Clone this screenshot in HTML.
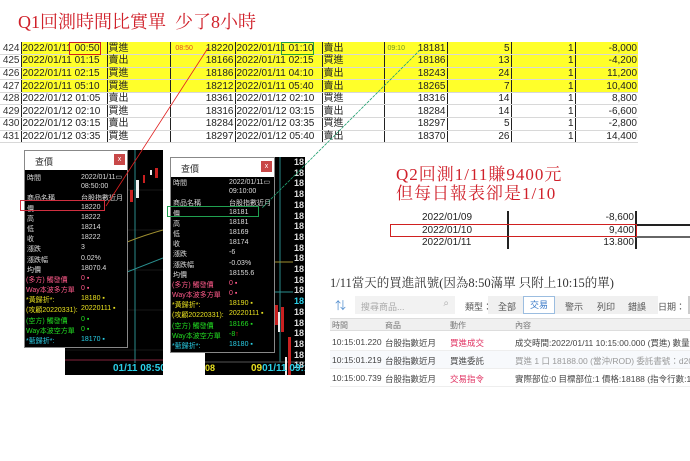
<!DOCTYPE html>
<html><head><meta charset="utf-8"><style>
*{margin:0;padding:0;box-sizing:border-box}
body{width:690px;height:461px;background:#fff;position:relative;overflow:hidden;font-family:"Liberation Sans","Noto Sans CJK TC",sans-serif}
.a{position:absolute;white-space:nowrap}
.t{font-family:"Liberation Serif","Noto Serif CJK SC",serif;color:#d0202a}
table.x{position:absolute;left:0;top:42px;border-collapse:collapse;font-size:10px;color:#222}
table.x td{height:12.6px;padding:0 1px;border-bottom:1px solid #d8d8d8;line-height:11px}
.y td{background:#ffff2a}
table.x td.n{background:#fff;text-align:right;width:21px;color:#333}
.bl{border-left:1.5px solid #222}
.r{text-align:right}
.pn{position:absolute;background:#000;border:1px solid #888;font-size:7px;color:#ddd}
.pn .h{background:#fff;height:19px;color:#333;font-size:9px;padding:4px 0 0 10px;position:relative}
.pn .h b{position:absolute;right:2px;top:3px;width:11px;height:11px;background:#c84848;color:#fff;font-size:7px;text-align:center;line-height:11px;font-weight:normal}
.pn .row{height:10.2px;position:relative}
.pn .row span{position:absolute;top:0}
.ch{position:absolute;background:#000;overflow:hidden}
.pk{color:#ff5a8a}.yl{color:#e8e020}.gr{color:#22dd22}.cy{color:#2ad0e8}
</style></head><body>
<div class="a t" style="left:18px;top:8px;font-size:18px">Q1回測時間比實單&nbsp;&nbsp;少了8小時</div>

<table class="x">
<colgroup><col style="width:21px"><col style="width:86px"><col style="width:63px"><col style="width:65px"><col style="width:87px"><col style="width:62px"><col style="width:63px"><col style="width:64px"><col style="width:64px"><col style="width:63px"></colgroup>
<tr class="y"><td class="n">424</td><td class="bl">2022/01/11 00:50</td><td class="bl">買進</td><td class="bl r"><span style="float:left;color:#e05020;font-size:7px">&nbsp;&nbsp;08:50</span>18220</td><td class="bl">2022/01/11 01:10</td><td class="bl">賣出</td><td class="bl r"><span style="float:left;color:#7a9a20;font-size:7px">&nbsp;09:10</span>18181</td><td class="bl r">5</td><td class="bl r">1</td><td class="bl r">-8,000</td></tr>
<tr class="y"><td class="n">425</td><td class="bl">2022/01/11 01:15</td><td class="bl">賣出</td><td class="bl r">18166</td><td class="bl">2022/01/11 02:15</td><td class="bl">買進</td><td class="bl r">18186</td><td class="bl r">13</td><td class="bl r">1</td><td class="bl r">-4,200</td></tr>
<tr class="y"><td class="n">426</td><td class="bl">2022/01/11 02:15</td><td class="bl">買進</td><td class="bl r">18186</td><td class="bl">2022/01/11 04:10</td><td class="bl">賣出</td><td class="bl r">18243</td><td class="bl r">24</td><td class="bl r">1</td><td class="bl r">11,200</td></tr>
<tr class="y"><td class="n">427</td><td class="bl">2022/01/11 05:10</td><td class="bl">買進</td><td class="bl r">18212</td><td class="bl">2022/01/11 05:40</td><td class="bl">賣出</td><td class="bl r">18265</td><td class="bl r">7</td><td class="bl r">1</td><td class="bl r">10,400</td></tr>
<tr><td class="n">428</td><td class="bl">2022/01/12 01:05</td><td class="bl">賣出</td><td class="bl r">18361</td><td class="bl">2022/01/12 02:10</td><td class="bl">買進</td><td class="bl r">18316</td><td class="bl r">14</td><td class="bl r">1</td><td class="bl r">8,800</td></tr>
<tr><td class="n">429</td><td class="bl">2022/01/12 02:10</td><td class="bl">買進</td><td class="bl r">18316</td><td class="bl">2022/01/12 03:15</td><td class="bl">賣出</td><td class="bl r">18284</td><td class="bl r">14</td><td class="bl r">1</td><td class="bl r">-6,600</td></tr>
<tr><td class="n">430</td><td class="bl">2022/01/12 03:15</td><td class="bl">賣出</td><td class="bl r">18284</td><td class="bl">2022/01/12 03:35</td><td class="bl">買進</td><td class="bl r">18297</td><td class="bl r">5</td><td class="bl r">1</td><td class="bl r">-2,800</td></tr>
<tr><td class="n">431</td><td class="bl">2022/01/12 03:35</td><td class="bl">買進</td><td class="bl r">18297</td><td class="bl">2022/01/12 05:40</td><td class="bl">賣出</td><td class="bl r">18370</td><td class="bl r">26</td><td class="bl r">1</td><td class="bl r">14,400</td></tr>
</table>
<div class="a" style="left:69px;top:42px;width:32px;height:13px;border:1.5px solid #d02020"></div>
<div class="a" style="left:281px;top:42px;width:33px;height:13px;border:1.5px solid #20a040"></div>

<!-- charts -->
<div class="ch" style="left:65px;top:150px;width:98px;height:225px">
<svg width="98" height="225" style="position:absolute;left:0;top:0">
<g stroke="#333" stroke-width=".5"><line x1="0" y1="40" x2="98" y2="40"/><line x1="0" y1="80" x2="98" y2="80"/><line x1="0" y1="120" x2="98" y2="120"/><line x1="0" y1="160" x2="98" y2="160"/><line x1="0" y1="200" x2="98" y2="200"/></g>
<line x1="70" y1="0" x2="70" y2="213" stroke="#2a8a8a" stroke-width="1"/>
<line x1="0" y1="210" x2="98" y2="210" stroke="#b03050" stroke-width=".8"/>
<path d="M62 92 Q80 85 98 80" stroke="#a09030" fill="none"/><path d="M62 122 Q80 115 98 108" stroke="#2a9090" fill="none"/>
<g fill="#c82020"><rect x="65" y="40" width="3" height="12"/><rect x="78" y="25" width="2" height="8"/><rect x="90" y="18" width="3" height="10"/></g>
<g fill="#eee"><rect x="71" y="30" width="3" height="18"/><rect x="85" y="20" width="2" height="5"/></g>
</svg>
<div class="a cy" style="left:48px;top:213px;font-size:10px;font-weight:bold">01/11 08:50</div>
</div>
<div class="ch" style="left:205px;top:157px;width:100px;height:218px">
<svg width="100" height="218" style="position:absolute;left:0;top:0">
<line x1="75" y1="0" x2="75" y2="205" stroke="#2a8a8a"/>
<line x1="55" y1="105" x2="88" y2="105" stroke="#a09030"/><line x1="55" y1="135" x2="88" y2="135" stroke="#2a9090"/>
<line x1="0" y1="205" x2="100" y2="205" stroke="#555"/>
<g fill="#c82020"><rect x="70" y="148" width="3" height="20"/><rect x="76" y="150" width="3" height="25"/><rect x="83" y="180" width="3" height="40"/></g>
<g fill="#eee"><rect x="73" y="155" width="2" height="20"/><rect x="80" y="200" width="2" height="20"/></g>
</svg>
<div class="a" style="left:89px;top:0;font-size:9px;line-height:10.7px;color:#ddd;font-weight:bold">18<br>18<br>18<br>18<br>18<br>18<br>18<br>18<br>18<br>18<br>18<br>18<br>18<br><span class="cy">18</span><br>18<br>18<br>18<br>18<br>18<br>18</div>
<div class="a yl" style="left:0;top:206px;font-size:9px;font-weight:bold">08</div>
<div class="a" style="left:46px;top:206px;font-size:10px;font-weight:bold"><span class="yl">09</span><span class="cy">01/11 09:10</span></div>
</div>

<!-- left panel -->
<div class="pn" style="left:24px;top:150px;width:104px;height:198px">
<div class="h">查價<b>x</b></div>
<div style="padding-top:3px">
<div class="row"><span style="left:2px">時間</span><span style="left:56px">2022/01/11▭</span></div>
<div class="row"><span style="left:56px">08:50:00</span></div>
<div class="row"><span style="left:2px">商品名稱</span><span style="left:56px">台股指數近月</span></div>
<div class="row"><span style="left:2px">價</span><span style="left:56px">18220</span></div>
<div class="row"><span style="left:2px">高</span><span style="left:56px">18222</span></div>
<div class="row"><span style="left:2px">低</span><span style="left:56px">18214</span></div>
<div class="row"><span style="left:2px">收</span><span style="left:56px">18222</span></div>
<div class="row"><span style="left:2px">漲跌</span><span style="left:56px">3</span></div>
<div class="row"><span style="left:2px">漲跌幅</span><span style="left:56px">0.02%</span></div>
<div class="row"><span style="left:2px">均價</span><span style="left:56px">18070.4</span></div>
<div class="row pk"><span style="left:1px">(多方) 觸發價</span><span style="left:56px">0 ▪</span></div>
<div class="row pk"><span style="left:1px">Way本波多方單</span><span style="left:56px">0 ▪</span></div>
<div class="row yl"><span style="left:1px">*黃歸折*:</span><span style="left:56px">18180 ▪</span></div>
<div class="row yl"><span style="left:1px">(攻顧20220331):</span><span style="left:56px">20220111 ▪</span></div>
<div class="row gr"><span style="left:1px">(空方) 觸發價</span><span style="left:56px">0 ▪</span></div>
<div class="row gr"><span style="left:1px">Way本波空方單</span><span style="left:56px">0 ▪</span></div>
<div class="row cy"><span style="left:1px">*藍歸折*:</span><span style="left:56px">18170 ▪</span></div>
</div></div>
<div class="a" style="left:20px;top:200px;width:85px;height:11px;border:1.5px solid #d03040"></div>

<!-- right panel -->
<div class="a" style="left:165px;top:353px;width:40px;height:25px;background:#fff"></div>
<div class="pn" style="left:170px;top:157px;width:105px;height:196px">
<div class="h">查價<b>x</b></div>
<div style="padding-top:1px">
<div class="row"><span style="left:2px">時間</span><span style="left:58px">2022/01/11▭</span></div>
<div class="row"><span style="left:58px">09:10:00</span></div>
<div class="row"><span style="left:2px">商品名稱</span><span style="left:58px">台股指數近月</span></div>
<div class="row"><span style="left:2px">價</span><span style="left:58px">18181</span></div>
<div class="row"><span style="left:2px">高</span><span style="left:58px">18181</span></div>
<div class="row"><span style="left:2px">低</span><span style="left:58px">18169</span></div>
<div class="row"><span style="left:2px">收</span><span style="left:58px">18174</span></div>
<div class="row"><span style="left:2px">漲跌</span><span style="left:58px">-6</span></div>
<div class="row"><span style="left:2px">漲跌幅</span><span style="left:58px">-0.03%</span></div>
<div class="row"><span style="left:2px">均價</span><span style="left:58px">18155.6</span></div>
<div class="row pk"><span style="left:1px">(多方) 觸發價</span><span style="left:58px">0 ▪</span></div>
<div class="row pk"><span style="left:1px">Way本波多方單</span><span style="left:58px">0 ▪</span></div>
<div class="row yl"><span style="left:1px">*黃歸折*:</span><span style="left:58px">18190 ▪</span></div>
<div class="row yl"><span style="left:1px">(攻顧20220331):</span><span style="left:58px">20220111 ▪</span></div>
<div class="row gr"><span style="left:1px">(空方) 觸發價</span><span style="left:58px">18166 ▪</span></div>
<div class="row gr"><span style="left:1px">Way本波空方單</span><span style="left:58px">-8 <span style="color:#e02020">↑</span></span></div>
<div class="row cy"><span style="left:1px">*藍歸折*:</span><span style="left:58px">18180 ▪</span></div>
</div></div>
<div class="a" style="left:167px;top:206px;width:92px;height:11px;border:1.5px solid #20a050"></div>

<svg class="a" style="left:0;top:0" width="690" height="461">
<line x1="208" y1="48" x2="106" y2="206" stroke="#e02020" stroke-width=".8"/>
<line x1="420" y1="50" x2="262" y2="208" stroke="#20a070" stroke-width=".8" stroke-dasharray="3 1"/>
</svg>

<!-- Q2 -->
<div class="a t" style="left:396px;top:165px;font-size:17px;line-height:19px;letter-spacing:1px">Q2回測1/11賺9400元<br>但每日報表卻是1/10</div>
<div class="a" style="left:422px;top:212px;font-size:10px;color:#222;line-height:12.5px">2022/01/09<br>2022/01/10<br>2022/01/11</div>
<div class="a" style="left:560px;top:212px;width:74px;text-align:right;font-size:10px;color:#222;line-height:12.5px">-8,600<br>9,400<br>13.800</div>
<div class="a" style="left:507px;top:211px;width:1.5px;height:38px;background:#222"></div>
<div class="a" style="left:635px;top:211px;width:1.5px;height:38px;background:#222"></div>
<div class="a" style="left:636px;top:224px;width:54px;height:1.5px;background:#222"></div>
<div class="a" style="left:636px;top:236px;width:54px;height:1.5px;background:#666"></div>
<div class="a" style="left:390px;top:224px;width:247px;height:13px;border:1.5px solid #d02020"></div>

<!-- bottom right -->
<div class="a" style="left:330px;top:273px;font-size:12.5px;color:#333;font-family:'Liberation Serif','Noto Serif CJK SC',serif">1/11當天的買進訊號(因為8:50滿單 只附上10:15的單)</div>
<div class="a" style="left:335px;top:297px;font-size:11px;color:#5590d0">⇅</div>
<div class="a" style="left:355px;top:296px;width:100px;height:18px;background:#f2f2f2;font-size:9px;color:#aaa;padding:4px 0 0 6px">搜尋商品...<span style="position:absolute;right:6px;top:2px;font-size:10px">⌕</span></div>
<div class="a" style="left:465px;top:300px;font-size:9px;color:#555">類型：</div>
<div class="a" style="left:488px;top:296px;width:200px;height:18px;background:#f0f0f0"></div>
<div class="a" style="left:498px;top:300px;font-size:9px;color:#555">全部</div>
<div class="a" style="left:523px;top:296px;width:32px;height:18px;background:#fff;border:1px solid #9bbde0;font-size:9px;color:#3a7ac8;text-align:center;line-height:16px">交易</div>
<div class="a" style="left:565px;top:300px;font-size:9px;color:#555">警示</div>
<div class="a" style="left:597px;top:300px;font-size:9px;color:#555">列印</div>
<div class="a" style="left:628px;top:300px;font-size:9px;color:#555">錯誤</div>
<div class="a" style="left:658px;top:296px;width:32px;height:18px;background:#fff;font-size:9px;color:#555;padding-top:4px">日期：</div>
<div class="a" style="left:688px;top:296px;width:2px;height:18px;background:#ccc"></div>
<div class="a" style="left:330px;top:318px;width:360px;height:13px;background:#f0f0f0;border-top:1px solid #ddd;border-bottom:1px solid #ddd;font-size:8px;color:#777"><span class="a" style="left:2px;top:1px">時間</span><span class="a" style="left:55px;top:1px">商品</span><span class="a" style="left:120px;top:1px">動作</span><span class="a" style="left:185px;top:1px">內容</span></div>
<div class="a" style="left:330px;top:333px;width:360px;height:18px;font-size:8.5px;color:#444;border-bottom:1px solid #eee"><span class="a" style="left:2px;top:4px">10:15:01.220</span><span class="a" style="left:55px;top:4px">台股指數近月</span><span class="a" style="left:120px;top:4px;color:#e03060">買進成交</span><span class="a" style="left:185px;top:4px">成交時間:2022/01/11 10:15:00.000 (買進) 數量:1 價格</span></div>
<div class="a" style="left:330px;top:351px;width:360px;height:18px;font-size:8.5px;color:#444;background:#f7f9fc;border-bottom:1px solid #eee"><span class="a" style="left:2px;top:4px">10:15:01.219</span><span class="a" style="left:55px;top:4px">台股指數近月</span><span class="a" style="left:120px;top:4px">買進委託</span><span class="a" style="left:185px;top:4px;color:#999">買進 1 口 18188.00 (當沖/ROD) 委託書號：d2004 時間</span></div>
<div class="a" style="left:330px;top:369px;width:360px;height:18px;font-size:8.5px;color:#444;border-bottom:1px solid #eee"><span class="a" style="left:2px;top:4px">10:15:00.739</span><span class="a" style="left:55px;top:4px">台股指數近月</span><span class="a" style="left:120px;top:4px;color:#e03060">交易指令</span><span class="a" style="left:185px;top:4px">實際部位:0 目標部位:1 價格:18188 (指令行數:120)</span></div>
</body></html>
